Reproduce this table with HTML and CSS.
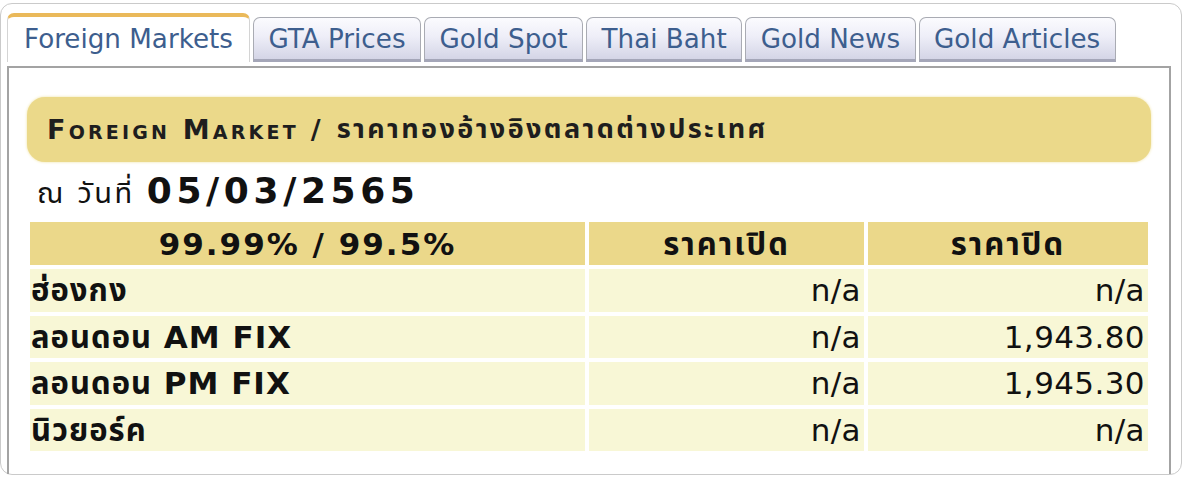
FILE: index.html
```html
<!DOCTYPE html>
<html lang="th">
<head>
<meta charset="utf-8">
<title>Foreign Market</title>
<link rel="stylesheet" href="styles.css">
</head>
<body>
<div class="card">
  <ul class="tabs">
    <li class="tab active">Foreign Markets</li>
    <li class="tab">GTA Prices</li>
    <li class="tab">Gold Spot</li>
    <li class="tab">Thai Baht</li>
    <li class="tab">Gold News</li>
    <li class="tab">Gold Articles</li>
  </ul>
  <div class="panel">
    <div class="title"><span class="en">Foreign Market</span><span class="sep">/</span><span class="th">ราคาทองอ้างอิงตลาดต่างประเทศ</span></div>
    <div class="date"><span class="label">ณ วันที่</span><b>05/03/2565</b></div>
    <table class="prices">
      <colgroup><col class="c1"><col class="c2"><col class="c3"></colgroup>
      <thead>
        <tr><th>99.99% / 99.5%</th><th>ราคาเปิด</th><th>ราคาปิด</th></tr>
      </thead>
      <tbody>
        <tr><td class="name">ฮ่องกง</td><td class="num">n/a</td><td class="num">n/a</td></tr>
        <tr><td class="name">ลอนดอน AM FIX</td><td class="num">n/a</td><td class="num">1,943.80</td></tr>
        <tr><td class="name">ลอนดอน PM FIX</td><td class="num">n/a</td><td class="num">1,945.30</td></tr>
        <tr><td class="name">นิวยอร์ค</td><td class="num">n/a</td><td class="num">n/a</td></tr>
      </tbody>
    </table>
  </div>
</div>
</body>
</html>
```
FILE: styles.css
```css
html, body {
  margin: 0;
  padding: 0;
  background: #ffffff;
}
body {
  font-family: "DejaVu Sans", "Noto Sans Thai", "Noto Sans", sans-serif;
  color: #111;
}
.card {
  box-sizing: border-box;
  width: 1182px;
  height: 472px;
  margin-top: 3px;
  border: 1px solid #cacaca;
  border-radius: 12px;
  padding: 9px 10px 0 6px;
  display: flex;
  flex-direction: column;
}
.tabs {
  list-style: none;
  margin: 0;
  padding: 0;
  display: flex;
  align-items: flex-end;
  gap: 3px;
  height: 49px;
}
.tab {
  box-sizing: border-box;
  height: 45px;
  padding: 0 14.5px;
  font-size: 26.2px;
  line-height: 42px;
  color: #3d5e8e;
  border: 1px solid #a9abb3;
  border-bottom: 3px solid #a4a6b8;
  border-radius: 7px 7px 0 0;
  background: linear-gradient(#fbfbfe 0%, #eeeef8 45%, #d4d5e6 100%);
  white-space: nowrap;
}
.tab.active {
  height: 49px;
  line-height: 44px;
  padding: 0 16px;
  background: #ffffff;
  border: 1px solid #d4d4d4;
  border-top: 4px solid #eab95a;
  border-bottom: none;
}
.panel {
  flex: 1;
  margin-top: 4px;
  border: 2px solid #a3a3a3;
  border-bottom: none;
  padding: 29px 18px 0 18px;
}
.title {
  height: 65px;
  border-radius: 18px;
  background: #ebd98a;
  box-shadow: 0 0 3px #efe2a0;
  display: flex;
  align-items: center;
  padding-left: 20px;
  font-size: 27px;
  font-weight: bold;
  color: #1e1e1e;
  white-space: nowrap;
}
.title .en {
  font-variant: small-caps;
  letter-spacing: 3.2px;
}
.title .sep {
  margin: 0 16px 0 12px;
}
.title .th {
  letter-spacing: 2.4px;
}
.date {
  height: 56px;
  display: flex;
  align-items: center;
  padding-left: 10px;
  box-sizing: border-box;
  white-space: nowrap;
}
.date .label {
  font-size: 29px;
  letter-spacing: 2.5px;
  margin-right: 12px;
  position: relative;
  top: 4px;
}
.date b {
  font-size: 36px;
  letter-spacing: 4.6px;
}
.prices {
  width: calc(100% + 2px);
  margin-left: -1px;
  border-spacing: 4px;
  table-layout: fixed;
  font-size: 31px;
  line-height: 36px;
}
.c1 { width: 555px; }
.c2 { width: 275px; }
.c3 { width: 280px; }
.prices th {
  background: #ebd88a;
  height: 43px;
  padding: 0 3px;
  font-weight: bold;
  text-align: center;
  letter-spacing: 2px;
}
.prices td {
  background: #f8f7d6;
  height: 42.5px;
  padding: 0 3px;
}
.prices td.name {
  font-weight: bold;
  padding-left: 1px;
  letter-spacing: 1px;
}
.prices td.num {
  text-align: right;
  letter-spacing: 0.4px;
}
```
